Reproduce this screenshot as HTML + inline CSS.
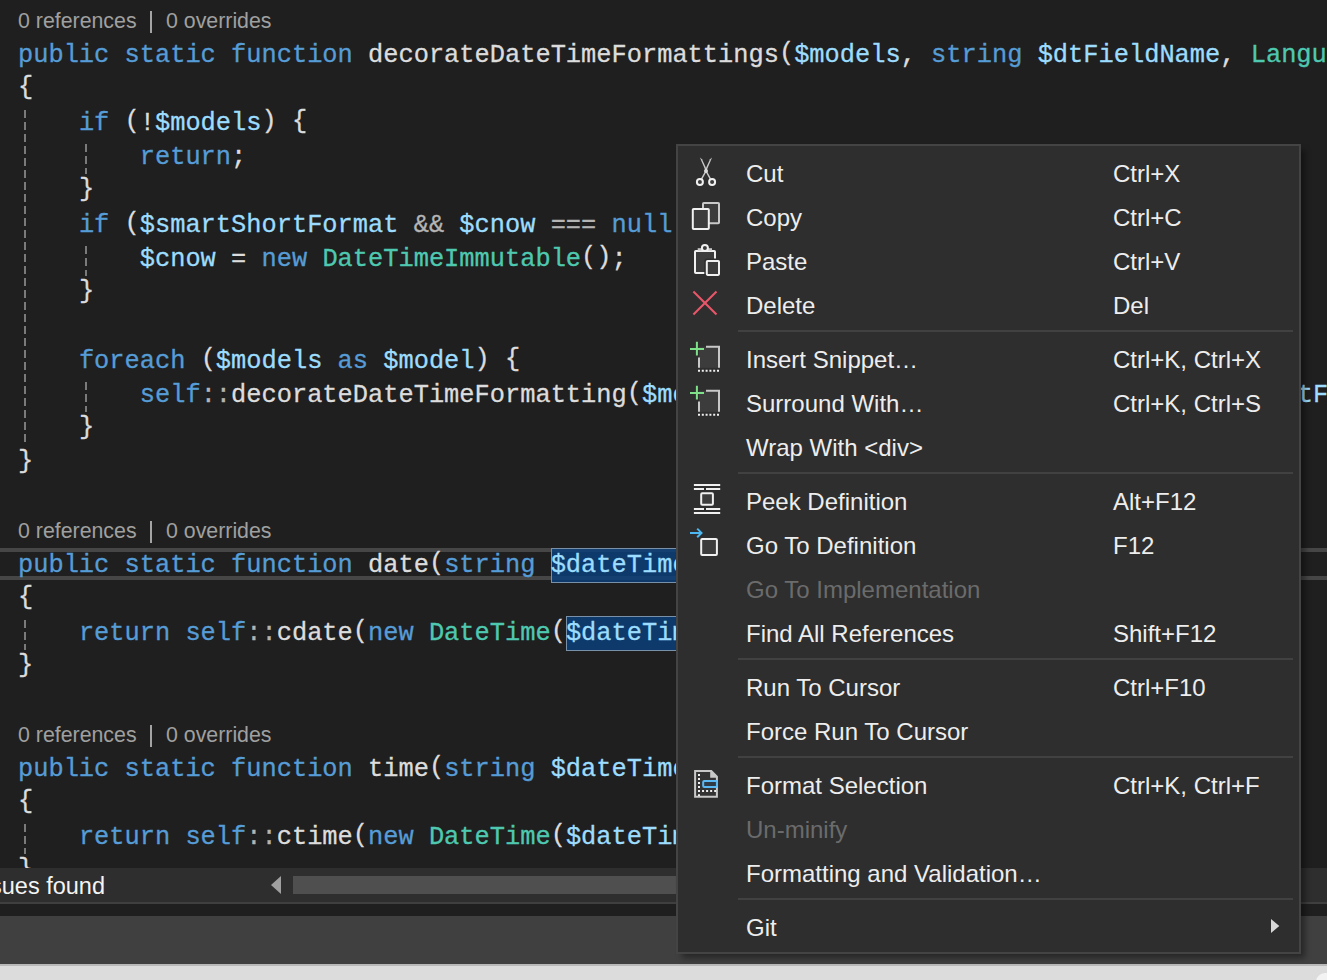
<!DOCTYPE html>
<html><head><meta charset="utf-8">
<style>
html,body{margin:0;padding:0;}
body{width:1327px;height:980px;overflow:hidden;background:#1f1f1f;position:relative;}
.ln{position:absolute;left:18px;height:34px;line-height:34px;margin-top:3px;white-space:pre;font-family:"Liberation Mono",monospace;font-size:25.37px;color:#dcdcdc;-webkit-text-stroke:0.3px currentColor;}
.lens{position:absolute;height:34px;line-height:34px;white-space:pre;font-family:"Liberation Sans",sans-serif;font-size:22.5px;color:#a0a0a0;transform-origin:0 0;}
.br{position:relative;top:-2px}
.k{color:#569cd6}.v{color:#9cdcfe}.t{color:#4ec9b0}.o{color:#b4b4b4}
.guide{position:absolute;width:2px;background:repeating-linear-gradient(to bottom,#7a7a7a 0,#7a7a7a 8px,transparent 8px,transparent 12px);}
.curline{position:absolute;left:0;width:1327px;top:548px;height:24px;border-top:4px solid #464646;border-bottom:4px solid #464646;}
.selbox{position:absolute;background:rgba(11,63,121,0.85);border:1.5px solid #7890a8;box-sizing:border-box;}
#menu{position:absolute;left:676px;top:144px;width:621px;height:806px;background:#2e2e2e;border:2px solid #444444;box-shadow:5px 5px 6px -1px rgba(0,0,0,0.4);}
.mi{position:absolute;left:678px;width:621px;height:44px;line-height:44px;font-family:"Liberation Sans",sans-serif;font-size:24px;color:#ededed;}
.mi .lbl{position:absolute;left:68px;top:1px;}
.mi .sc{position:absolute;left:435px;top:1px;}
.mi.dis{color:#6b6b6b;}
.sep{position:absolute;left:738px;width:555px;height:2px;background:#414141;}
.ic{position:absolute;left:686px;}
#status{position:absolute;left:0;top:868px;width:1327px;height:34px;background:#2e2e2e;}
#statline{position:absolute;left:0;top:902px;width:1327px;height:2px;background:#3f3f3f;}
#dark2{position:absolute;left:0;top:904px;width:1327px;height:12px;background:#1f1f1f;}
#gray2{position:absolute;left:0;top:916px;width:1327px;height:48px;background:#404040;}
#light{position:absolute;left:0;top:964px;width:1327px;height:16px;background:#dcdcdc;border-top:2px solid #b9b9b9;box-sizing:border-box;}
#wcorner{position:absolute;left:1316px;top:973px;width:40px;height:30px;background:#f3f3f3;border-radius:9px;}
#issues{position:absolute;top:869px;right:1222px;height:34px;line-height:34px;font-family:"Liberation Sans",sans-serif;font-size:23.5px;color:#f4f4f4;white-space:pre;}
#thumb{position:absolute;left:293px;top:876px;width:1000px;height:18px;background:#4f4f4f;}
</style></head><body>
<div class="curline"></div>
<div class="selbox" style="left:550.5px;top:547.5px;width:140px;height:35px"></div>
<div class="selbox" style="left:566px;top:615.5px;width:140px;height:35px"></div>
<div class="lens" style="left:18px;top:4px;transform:scaleX(0.948)">0 references</div>
<div style="position:absolute;left:150px;top:11px;width:2px;height:22px;background:#a4a4a4"></div>
<div class="lens" style="left:165.5px;top:4px;transform:scaleX(0.948)">0 overrides</div>
<div class="lens" style="left:18px;top:514px;transform:scaleX(0.948)">0 references</div>
<div style="position:absolute;left:150px;top:521px;width:2px;height:22px;background:#a4a4a4"></div>
<div class="lens" style="left:165.5px;top:514px;transform:scaleX(0.948)">0 overrides</div>
<div class="lens" style="left:18px;top:718px;transform:scaleX(0.948)">0 references</div>
<div style="position:absolute;left:150px;top:725px;width:2px;height:22px;background:#a4a4a4"></div>
<div class="lens" style="left:165.5px;top:718px;transform:scaleX(0.948)">0 overrides</div>
<div class="ln" style="top:36px"><span class="k">public</span> <span class="k">static</span> <span class="k">function</span> decorateDateTimeFormattings<span class="br">(</span><span class="v">$models</span>, <span class="k">string</span> <span class="v">$dtFieldName</span>, <span class="t">Language</span></div>
<div class="ln" style="top:70px"><span class="br">{</span></div>
<div class="ln" style="top:104px">    <span class="k">if</span> <span class="br">(</span>!<span class="v">$models</span><span class="br">)</span> <span class="br">{</span></div>
<div class="ln" style="top:138px">        <span class="k">return</span>;</div>
<div class="ln" style="top:172px">    <span class="br">}</span></div>
<div class="ln" style="top:206px">    <span class="k">if</span> <span class="br">(</span><span class="v">$smartShortFormat</span> <span class="o">&amp;&amp;</span> <span class="v">$cnow</span> <span class="o">===</span> <span class="k">null</span><span class="br">)</span> <span class="br">{</span></div>
<div class="ln" style="top:240px">        <span class="v">$cnow</span> = <span class="k">new</span> <span class="t">DateTimeImmutable</span><span class="br">(</span><span class="br">)</span>;</div>
<div class="ln" style="top:274px">    <span class="br">}</span></div>
<div class="ln" style="top:342px">    <span class="k">foreach</span> <span class="br">(</span><span class="v">$models</span> <span class="k">as</span> <span class="v">$model</span><span class="br">)</span> <span class="br">{</span></div>
<div class="ln" style="top:376px">        <span class="k">self</span><span class="o">::</span>decorateDateTimeFormatting<span class="br">(</span><span class="v">$model</span>,                                  <span style="position:relative;left:1.5px"><span class="v">$dtFieldName</span></span><span class="br">)</span>;</div>
<div class="ln" style="top:410px">    <span class="br">}</span></div>
<div class="ln" style="top:444px"><span class="br">}</span></div>
<div class="ln" style="top:546px"><span class="k">public</span> <span class="k">static</span> <span class="k">function</span> date<span class="br">(</span><span class="k">string</span> <span class="sel1"><span class="v">$dateTime</span></span></div>
<div class="ln" style="top:580px"><span class="br">{</span></div>
<div class="ln" style="top:614px">    <span class="k">return</span> <span class="k">self</span><span class="o">::</span>cdate<span class="br">(</span><span class="k">new</span> <span class="t">DateTime</span><span class="br">(</span><span class="sel2"><span class="v">$dateTime</span></span></div>
<div class="ln" style="top:648px"><span class="br">}</span></div>
<div class="ln" style="top:750px"><span class="k">public</span> <span class="k">static</span> <span class="k">function</span> time<span class="br">(</span><span class="k">string</span> <span class="v">$dateTime</span></div>
<div class="ln" style="top:784px"><span class="br">{</span></div>
<div class="ln" style="top:818px">    <span class="k">return</span> <span class="k">self</span><span class="o">::</span>ctime<span class="br">(</span><span class="k">new</span> <span class="t">DateTime</span><span class="br">(</span><span class="v">$dateTime</span></div>
<div class="ln" style="top:852px"><span class="br">}</span></div>
<div class="guide" style="left:24px;top:110px;height:336px"></div>
<div class="guide" style="left:85px;top:144px;height:30px"></div>
<div class="guide" style="left:85px;top:246px;height:30px"></div>
<div class="guide" style="left:85px;top:382px;height:30px"></div>
<div class="guide" style="left:24px;top:620px;height:30px"></div>
<div class="guide" style="left:24px;top:824px;height:30px"></div>
<div id="status"></div><div id="thumb"></div><div id="statline"></div><div id="dark2"></div><div id="gray2"></div><div id="light"></div><div id="wcorner"></div>
<div id="issues">sues found</div>
<svg style="position:absolute;left:270px;top:875px" width="12" height="20"><path d="M1 10 L11 1 V19 Z" fill="#a0a0a0"/></svg>
<div id="menu"></div>
<div class="mi" style="top:151px"><span class="lbl">Cut</span><span class="sc">Ctrl+X</span></div>
<svg class="ic" style="top:151px" width="40" height="44" viewBox="0 0 40 44"><path d="M13.9 6.4 L16 8.2 L21.2 19.6 L19.9 20.6 Z" fill="#c8c8c8"/>
<path d="M26.1 6.4 L24 8.2 L18.8 19.6 L20.1 20.6 Z" fill="#c8c8c8"/>
<path d="M20 20 L24.4 27.8 M20 20 L15.6 27.8" stroke="#c8c8c8" stroke-width="1.5" fill="none"/>
<circle cx="20" cy="20" r="2" fill="#dcdcdc"/>
<circle cx="13.9" cy="31" r="3" stroke="#f0f0f0" stroke-width="2" fill="#3c3c3c"/>
<circle cx="26.1" cy="31" r="3" stroke="#f0f0f0" stroke-width="2" fill="#3c3c3c"/></svg>
<div class="mi" style="top:195px"><span class="lbl">Copy</span><span class="sc">Ctrl+C</span></div>
<svg class="ic" style="top:195px" width="40" height="44" viewBox="0 0 40 44"><rect x="17" y="8" width="16" height="20.2" rx="0.8" fill="#3c3c3c" stroke="#c8c8c8" stroke-width="2"/>
<rect x="6.8" y="14" width="16" height="20" rx="0.8" fill="#3c3c3c" stroke="#f0f0f0" stroke-width="2"/></svg>
<div class="mi" style="top:239px"><span class="lbl">Paste</span><span class="sc">Ctrl+V</span></div>
<svg class="ic" style="top:239px" width="40" height="44" viewBox="0 0 40 44"><rect x="9" y="12" width="20" height="22" rx="0.8" fill="#3c3c3c" stroke="#f0f0f0" stroke-width="2"/>
<path d="M11.7 9.2 H26 V11.5 H11.7 Z" fill="#c8c8c8"/>
<circle cx="18.9" cy="9" r="3" fill="#3c3c3c" stroke="#f0f0f0" stroke-width="2"/>
<rect x="20.8" y="21.9" width="12.2" height="14" rx="0.8" fill="#3c3c3c" stroke="#2e2e2e" stroke-width="5"/>
<rect x="20.8" y="21.9" width="12.2" height="14" rx="0.8" fill="#3c3c3c" stroke="#f0f0f0" stroke-width="2"/></svg>
<div class="mi" style="top:283px"><span class="lbl">Delete</span><span class="sc">Del</span></div>
<svg class="ic" style="top:283px" width="40" height="44" viewBox="0 0 40 44"><path d="M7.4 8.6 L30.5 31.4 M30.5 8.6 L7.4 31.4" stroke="#e8566a" stroke-width="2.1" fill="none"/></svg>
<div class="mi" style="top:337px"><span class="lbl">Insert Snippet…</span><span class="sc">Ctrl+K, Ctrl+X</span></div>
<svg class="ic" style="top:337px" width="40" height="44" viewBox="0 0 40 44"><rect x="13" y="9.8" width="20" height="21" fill="#3c3c3c"/>
<path d="M20 9.8 H33 V30.8" stroke="#c8c8c8" stroke-width="2" fill="none"/>
<path d="M13 20.6 V30.8" stroke="#c8c8c8" stroke-width="2" fill="none"/>
<path d="M12 33.7 H34" stroke="#f0f0f0" stroke-width="2" fill="none" stroke-dasharray="2 1.8"/>
<path d="M4 11.9 H18 M10.9 4.7 V18.5" stroke="#7fe08a" stroke-width="2" fill="none"/></svg>
<div class="mi" style="top:381px"><span class="lbl">Surround With…</span><span class="sc">Ctrl+K, Ctrl+S</span></div>
<svg class="ic" style="top:381px" width="40" height="44" viewBox="0 0 40 44"><rect x="13" y="9.8" width="20" height="21" fill="#3c3c3c"/>
<path d="M20 9.8 H33 V30.8" stroke="#c8c8c8" stroke-width="2" fill="none"/>
<path d="M13 20.6 V30.8" stroke="#c8c8c8" stroke-width="2" fill="none"/>
<path d="M12 33.7 H34" stroke="#f0f0f0" stroke-width="2" fill="none" stroke-dasharray="2 1.8"/>
<path d="M4 11.9 H18 M10.9 4.7 V18.5" stroke="#7fe08a" stroke-width="2" fill="none"/></svg>
<div class="mi" style="top:425px"><span class="lbl">Wrap With &lt;div&gt;</span></div>
<div class="mi" style="top:479px"><span class="lbl">Peek Definition</span><span class="sc">Alt+F12</span></div>
<svg class="ic" style="top:479px" width="40" height="44" viewBox="0 0 40 44"><path d="M7.9 6 H34.2 M7.9 9.9 H18 M20 9.9 H34.2 M7.9 29.9 H18 M20 29.9 H34.2 M7.9 34 H34.2" stroke="#f0f0f0" stroke-width="2" fill="none"/>
<rect x="15.2" y="14.3" width="11.7" height="11.5" rx="1" fill="#3c3c3c" stroke="#f0f0f0" stroke-width="2"/></svg>
<div class="mi" style="top:523px"><span class="lbl">Go To Definition</span><span class="sc">F12</span></div>
<svg class="ic" style="top:523px" width="40" height="44" viewBox="0 0 40 44"><rect x="15.2" y="16.1" width="15.7" height="15.8" rx="1" fill="#3c3c3c" stroke="#f0f0f0" stroke-width="2"/>
<path d="M4 9.9 H15 M11.2 5.6 L15.5 9.9 L11.2 14.2" stroke="#4db8f0" stroke-width="2" fill="none"/></svg>
<div class="mi dis" style="top:567px"><span class="lbl">Go To Implementation</span></div>
<div class="mi" style="top:611px"><span class="lbl">Find All References</span><span class="sc">Shift+F12</span></div>
<div class="mi" style="top:665px"><span class="lbl">Run To Cursor</span><span class="sc">Ctrl+F10</span></div>
<div class="mi" style="top:709px"><span class="lbl">Force Run To Cursor</span></div>
<div class="mi" style="top:763px"><span class="lbl">Format Selection</span><span class="sc">Ctrl+K, Ctrl+F</span></div>
<svg class="ic" style="top:763px" width="40" height="44" viewBox="0 0 40 44"><path d="M9.1 8 H25.3 L30.9 13.6 V33.8 H9.1 Z" fill="#333333" stroke="#c8c8c8" stroke-width="2"/>
<path d="M24.2 7 L31.9 14.8 H24.2 Z" fill="#c8c8c8"/>
<path d="M13 10.9 V33" stroke="#f0f0f0" stroke-width="2" stroke-dasharray="2 2.05" fill="none"/>
<path d="M12 28.1 H30" stroke="#f0f0f0" stroke-width="2" stroke-dasharray="2 2.05" fill="none"/>
<rect x="17.2" y="18.1" width="13.7" height="5.8" rx="1" fill="#2f3a44" stroke="#5ab8f5" stroke-width="2"/></svg>
<div class="mi dis" style="top:807px"><span class="lbl">Un-minify</span></div>
<div class="mi" style="top:851px"><span class="lbl">Formatting and Validation…</span></div>
<div class="mi" style="top:905px"><span class="lbl">Git</span></div>
<div class="sep" style="top:330px"></div>
<div class="sep" style="top:472px"></div>
<div class="sep" style="top:658px"></div>
<div class="sep" style="top:756px"></div>
<div class="sep" style="top:898px"></div>
<svg style="position:absolute;left:1270px;top:918px" width="12" height="16"><path d="M1 1 L9.3 8 L1 15 Z" fill="#d8d8d8"/></svg>
</body></html>
